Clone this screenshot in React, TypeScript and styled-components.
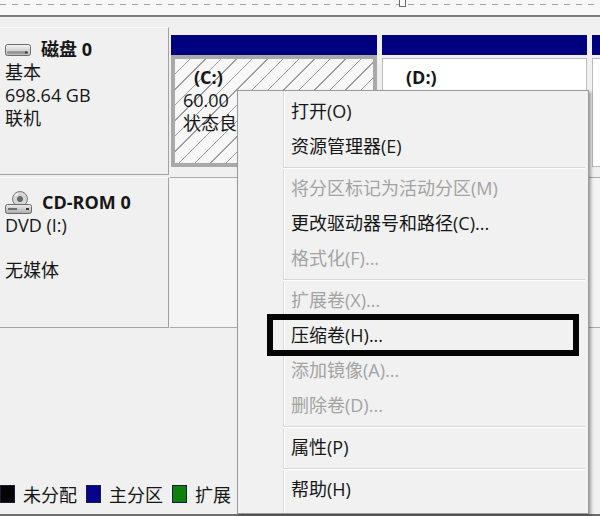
import React from "react";
import styled, { createGlobalStyle, css } from "styled-components";

const GlobalStyle = createGlobalStyle`
  html, body {
    margin: 0;
    padding: 0;
    background: #f0f0f0;
  }
  body {
    font-family: "Open Sans", "Noto Sans CJK SC", sans-serif;
  }
`;

const Screen = styled.div`
  position: relative;
  width: 600px;
  height: 516px;
  overflow: hidden;
  display: flex;
  flex-direction: column;
  background: #f0f0f0;
  color: #161616;
  font-size: 18px;
`;

const TopStrip = styled.div`
  position: relative;
  height: 15px;
  flex-shrink: 0;
  background-color: #f7f7f7;
  background-image: repeating-linear-gradient(90deg, #a2a2a2 0 6px, transparent 6px 12px);
  background-size: 100% 1px;
  background-repeat: no-repeat;
  background-position: 0 4px;
  border-bottom: 2px solid #7c7c7c;
`;

const Handle = styled.span`
  position: absolute;
  left: 399px;
  top: -1px;
  width: 5px;
  height: 6px;
  border: 1px solid #6c6c6c;
  background: #fafafa;
`;

const DiskList = styled.div`
  display: flex;
  flex-direction: column;
  gap: 2px;
  padding-top: 10px;
`;

const DiskRow = styled.div<{ $height: number }>`
  display: grid;
  grid-template-columns: 169px 1fr;
  height: ${(p) => p.$height}px;
`;

const LabelPanel = styled.div<{ $padTop: number }>`
  box-sizing: border-box;
  padding: ${(p) => p.$padTop}px 0 0 5px;
  border-top: 1px solid #fafafa;
  border-right: 1px solid #a2a2a2;
  border-bottom: 1px solid #a2a2a2;
  line-height: 23px;
  white-space: nowrap;
`;

const TitleLine = styled.div`
  display: flex;
  align-items: center;
  gap: 10px;
  font-weight: 700;
`;

const InfoLine = styled.div<{ $gapBefore?: number }>`
  margin-top: ${(p) => p.$gapBefore ?? 0}px;
`;

const PartitionArea = styled.div`
  display: flex;
  gap: 5px;
  padding: 8px 0 8px 2px;
  overflow: hidden;
`;

const Partition = styled.div<{ $width: number }>`
  display: flex;
  flex-direction: column;
  width: ${(p) => p.$width}px;
  flex-shrink: 0;
`;

const PartitionHeader = styled.div`
  height: 20px;
  background: #01017f;
  flex-shrink: 0;
`;

const PartitionBody = styled.div<{ $selected?: boolean }>`
  flex: 1;
  box-sizing: border-box;
  overflow: hidden;
  white-space: nowrap;
  line-height: 23px;
  ${(p) =>
    p.$selected
      ? css`
          border: 4px solid #a9a9a9;
          padding: 7px 0 0 8px;
          background-color: #f7f7f7;
          background-image: repeating-linear-gradient(
            135deg,
            transparent 0 10px,
            #9c9c9c 10px 11px
          );
        `
      : css`
          margin-top: 3px;
          border: 1px solid #bcbcbc;
          padding: 7px 0 0 12px;
          background: #ffffff;
        `}
`;

const PartitionName = styled.div`
  font-weight: 700;
  text-indent: 11px;
`;

const EmptyDrive = styled.div`
  margin-left: 1px;
  border-top: 1px solid #ababab;
  border-bottom: 1px solid #ababab;
  background: #f4f4f4;
`;

const Filler = styled.div`
  flex: 1;
`;

const Legend = styled.div`
  display: flex;
  align-items: center;
  height: 18px;
  margin-bottom: 11px;
  white-space: nowrap;
`;

const Swatch = styled.span<{ $color: string }>`
  width: 15px;
  height: 18px;
  box-sizing: border-box;
  background: ${(p) => p.$color};
  border: 1px solid #1c1c3a;
  margin-right: 8px;
  flex-shrink: 0;
`;

const LegendLabel = styled.span`
  margin-right: 9px;
`;

const BottomEdge = styled.div`
  height: 2px;
  background: #6e6e6e;
  flex-shrink: 0;
`;

const Menu = styled.div`
  position: absolute;
  left: 237px;
  top: 90px;
  width: 352px;
  box-sizing: border-box;
  padding: 3px 0 6px;
  border: 1px solid #9a9a9a;
  background-color: #f1f1f1;
  background-image: linear-gradient(
    to right,
    transparent 45px,
    #d9d9d9 45px 46px,
    #ffffff 46px 47px,
    transparent 47px
  );
  box-shadow: 2px 2px 3px rgba(0, 0, 0, 0.35);
  font-size: 18px;
`;

const MenuItem = styled.div<{ $disabled?: boolean; $marked?: boolean }>`
  position: relative;
  height: 35px;
  line-height: 35px;
  padding-left: 53px;
  white-space: nowrap;
  color: ${(p) => (p.$disabled ? "#a3a3a3" : "#161616")};
  ${(p) =>
    p.$marked &&
    css`
      &::after {
        content: "";
        position: absolute;
        left: 29px;
        right: 9px;
        top: -4px;
        bottom: -3px;
        border: 6px solid #050505;
      }
    `}
`;

const MenuSeparator = styled.div`
  height: 7px;
  margin: 0 3px 0 45px;
  background: linear-gradient(
    to bottom,
    transparent 3px,
    #d6d6d6 3px 4px,
    #ffffff 4px 5px,
    transparent 5px
  );
`;

const HardDiskIcon = () => (
  <svg width="26" height="12" viewBox="0 0 26 12">
    <defs>
      <linearGradient id="hdd" x1="0" y1="0" x2="0" y2="1">
        <stop offset="0" stopColor="#f4f4f4" />
        <stop offset="1" stopColor="#b9b9b9" />
      </linearGradient>
    </defs>
    <rect x="0.5" y="0.5" width="25" height="11" rx="2" fill="url(#hdd)" stroke="#6d6d6d" />
    <rect x="2" y="7" width="21" height="3" rx="1" fill="#9a9a9a" />
    <rect x="20" y="7.5" width="2.5" height="2" fill="#3b3b3b" />
  </svg>
);

const CdDriveIcon = () => (
  <svg width="27" height="23" viewBox="0 0 27 23">
    <defs>
      <linearGradient id="cdbox" x1="0" y1="0" x2="0" y2="1">
        <stop offset="0" stopColor="#eeeeee" />
        <stop offset="1" stopColor="#a9a9a9" />
      </linearGradient>
    </defs>
    <circle cx="15" cy="8" r="7.5" fill="#d4d4d4" stroke="#7a7a7a" />
    <circle cx="15" cy="8" r="2.5" fill="#5b7a5b" stroke="#4a4a4a" strokeWidth="0.8" />
    <path d="M10 4.5 L13 2.5" stroke="#ffffff" strokeWidth="1.2" />
    <rect x="0.5" y="13.5" width="26" height="9" rx="2" fill="url(#cdbox)" stroke="#6a6a6a" />
    <rect x="3" y="17" width="9" height="2" fill="#6f6f6f" />
    <rect x="21" y="17" width="3" height="2" fill="#3a3a3a" />
  </svg>
);

type Entry =
  | { kind: "item"; label: string; disabled?: boolean; marked?: boolean }
  | { kind: "sep" };

const menuEntries: Entry[] = [
  { kind: "item", label: "打开(O)" },
  { kind: "item", label: "资源管理器(E)" },
  { kind: "sep" },
  { kind: "item", label: "将分区标记为活动分区(M)", disabled: true },
  { kind: "item", label: "更改驱动器号和路径(C)..." },
  { kind: "item", label: "格式化(F)...", disabled: true },
  { kind: "sep" },
  { kind: "item", label: "扩展卷(X)...", disabled: true },
  { kind: "item", label: "压缩卷(H)...", marked: true },
  { kind: "item", label: "添加镜像(A)...", disabled: true },
  { kind: "item", label: "删除卷(D)...", disabled: true },
  { kind: "sep" },
  { kind: "item", label: "属性(P)" },
  { kind: "sep" },
  { kind: "item", label: "帮助(H)" },
];

const legend = [
  { color: "#050505", label: "未分配" },
  { color: "#04048a", label: "主分区" },
  { color: "#0e800e", label: "扩展" },
];

export default function App() {
  return (
    <>
      <GlobalStyle />
      <Screen>
        <TopStrip>
          <Handle />
        </TopStrip>

        <DiskList>
          <DiskRow $height={148}>
            <LabelPanel $padTop={10}>
              <TitleLine>
                <HardDiskIcon />
                磁盘 0
              </TitleLine>
              <InfoLine>基本</InfoLine>
              <InfoLine>698.64 GB</InfoLine>
              <InfoLine>联机</InfoLine>
            </LabelPanel>
            <PartitionArea>
              <Partition $width={206}>
                <PartitionHeader />
                <PartitionBody $selected>
                  <PartitionName>(C:)</PartitionName>
                  <div>60.00</div>
                  <div>状态良</div>
                </PartitionBody>
              </Partition>
              <Partition $width={205}>
                <PartitionHeader />
                <PartitionBody>
                  <PartitionName>(D:)</PartitionName>
                </PartitionBody>
              </Partition>
              <Partition $width={120}>
                <PartitionHeader />
                <PartitionBody />
              </Partition>
            </PartitionArea>
          </DiskRow>

          <DiskRow $height={151}>
            <LabelPanel $padTop={13}>
              <TitleLine>
                <CdDriveIcon />
                CD-ROM 0
              </TitleLine>
              <InfoLine>DVD (I:)</InfoLine>
              <InfoLine $gapBefore={22}>无媒体</InfoLine>
            </LabelPanel>
            <EmptyDrive />
          </DiskRow>
        </DiskList>

        <Filler />

        <Legend>
          {legend.map((l) => (
            <React.Fragment key={l.label}>
              <Swatch $color={l.color} />
              <LegendLabel>{l.label}</LegendLabel>
            </React.Fragment>
          ))}
        </Legend>
        <BottomEdge />

        <Menu>
          {menuEntries.map((e, i) =>
            e.kind === "sep" ? (
              <MenuSeparator key={i} />
            ) : (
              <MenuItem key={i} $disabled={e.disabled} $marked={e.marked}>
                {e.label}
              </MenuItem>
            )
          )}
        </Menu>
      </Screen>
    </>
  );
}
